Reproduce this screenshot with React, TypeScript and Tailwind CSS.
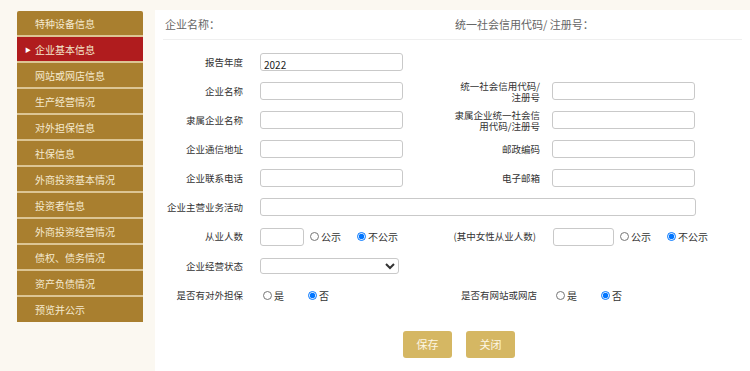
import { useState } from "react";

const menuItems = [
  "特种设备信息",
  "企业基本信息",
  "网站或网店信息",
  "生产经营情况",
  "对外担保信息",
  "社保信息",
  "外商投资基本情况",
  "投资者信息",
  "外商投资经营情况",
  "债权、债务情况",
  "资产负债情况",
  "预览并公示",
];

const Label = ({ children, right }: { children: React.ReactNode; right?: boolean }) => (
  <div
    className={
      right
        ? "ml-[51px] w-[86px] text-right leading-[11px] text-[9.5px]"
        : "w-[88px] text-right leading-[11px] text-[9.5px]"
    }
  >
    {children}
  </div>
);

const TextInput = ({ value, wide }: { value?: string; wide?: boolean }) => (
  <input
    defaultValue={value}
    className={
      (wide ? "w-[436px]" : "w-[143px]") +
      " h-[18px] border border-[#c9c9c9] rounded-[3px] bg-white px-[3px] pt-[4px] text-[10px] text-[#222] outline-none"
    }
  />
);

const Radio = ({ name, label, checked }: { name: string; label: string; checked?: boolean }) => (
  <label className="flex items-center gap-[2px]">
    <input
      type="radio"
      name={name}
      defaultChecked={checked}
      className="m-0 w-[9px] h-[9px]"
    />
    <span>{label}</span>
  </label>
);

const App = () => {
  const [active] = useState(1);

  return (
    <div
      className="w-[750px] h-[371px] bg-[#fbf8f1] flex overflow-hidden text-[10px] text-[#333]"
      style={{ fontFamily: '"Noto Sans CJK SC", "Noto Sans", sans-serif' }}
    >
      {/* left menu */}
      <div className="ml-[17px] mt-[11px] w-[126px] self-start rounded-t-[2px] overflow-hidden">
        {menuItems.map((item, i) => (
          <div
            key={item}
            className={
              (i === active ? "bg-[#b01c1e]" : "bg-[#a97f2f]") +
              (i === menuItems.length - 1 ? " h-[25px]" : " h-[26px] border-b-[2px] border-[#dcc594]") +
              " flex items-center text-[10px] text-[#f5ead0] relative"
            }
          >
            {i === active && (
              <span className="absolute left-[8px] text-[6px] text-white">▶</span>
            )}
            <span className="pl-[18px]">{item}</span>
          </div>
        ))}
      </div>

      {/* main panel */}
      <div className="ml-[12px] mt-[10px] flex-1 bg-white">
        <div className="h-[30px] mx-[8px] flex items-center border-b border-[#efefef] text-[11px] text-[#666]">
          <div className="w-[292px] pl-[2px]">企业名称：</div>
          <div>统一社会信用代码/ 注册号：</div>
        </div>

        <div className="mt-[8px]">
          <div className="h-[29px] flex items-center">
            <Label>报告年度</Label>
            <div className="ml-[17px]">
              <TextInput value="2022" />
            </div>
          </div>

          <div className="h-[29px] flex items-center">
            <Label>企业名称</Label>
            <div className="ml-[17px]">
              <TextInput />
            </div>
            <Label right>统一社会信用代码/注册号</Label>
            <div className="ml-[12px]">
              <TextInput />
            </div>
          </div>

          <div className="h-[29px] flex items-center">
            <Label>隶属企业名称</Label>
            <div className="ml-[17px]">
              <TextInput />
            </div>
            <Label right>隶属企业统一社会信用代码/注册号</Label>
            <div className="ml-[12px]">
              <TextInput />
            </div>
          </div>

          <div className="h-[29px] flex items-center">
            <Label>企业通信地址</Label>
            <div className="ml-[17px]">
              <TextInput />
            </div>
            <Label right>邮政编码</Label>
            <div className="ml-[12px]">
              <TextInput />
            </div>
          </div>

          <div className="h-[29px] flex items-center">
            <Label>企业联系电话</Label>
            <div className="ml-[17px]">
              <TextInput />
            </div>
            <Label right>电子邮箱</Label>
            <div className="ml-[12px]">
              <TextInput />
            </div>
          </div>

          <div className="h-[29px] flex items-center">
            <Label>企业主营业务活动</Label>
            <div className="ml-[17px]">
              <TextInput wide />
            </div>
          </div>

          <div className="h-[29px] flex items-center">
            <Label>从业人数</Label>
            <input className="ml-[17px] w-[44px] h-[18px] border border-[#c9c9c9] rounded-[3px] outline-none" />
            <div className="ml-[6px] flex items-center gap-[16px]">
              <Radio name="cy" label="公示" />
              <Radio name="cy" label="不公示" checked />
            </div>
            <div className="ml-[52px] w-[86px] text-right text-[9.5px] whitespace-nowrap">(其中女性从业人数)</div>
            <input className="ml-[17px] w-[61px] h-[18px] border border-[#c9c9c9] rounded-[3px] outline-none" />
            <div className="ml-[6px] flex items-center gap-[16px]">
              <Radio name="nx" label="公示" />
              <Radio name="nx" label="不公示" checked />
            </div>
          </div>

          <div className="h-[30px] flex items-center">
            <Label>企业经营状态</Label>
            <select className="ml-[17px] w-[139px] h-[16px] border border-[#c9c9c9] rounded-[3px] bg-white text-[10px] outline-none">
              <option></option>
            </select>
          </div>

          <div className="h-[29px] flex items-center">
            <Label>是否有对外担保</Label>
            <div className="ml-[20px] flex items-center gap-[24px]">
              <Radio name="db" label="是" />
              <Radio name="db" label="否" checked />
            </div>
            <div className="ml-[132px] w-[76px] text-right text-[9.5px] whitespace-nowrap">是否有网站或网店</div>
            <div className="ml-[19px] flex items-center gap-[24px]">
              <Radio name="wz" label="是" />
              <Radio name="wz" label="否" checked />
            </div>
          </div>
        </div>

        <div className="mt-[21px] flex gap-[14px] pl-[248px]">
          <button className="w-[49px] h-[27px] rounded-[3px] bg-[#d5b763] text-[11px] text-[#fdf6e3]">
            保存
          </button>
          <button className="w-[49px] h-[27px] rounded-[3px] bg-[#d5b763] text-[11px] text-[#fdf6e3]">
            关闭
          </button>
        </div>
      </div>
    </div>
  );
};

export default App;
